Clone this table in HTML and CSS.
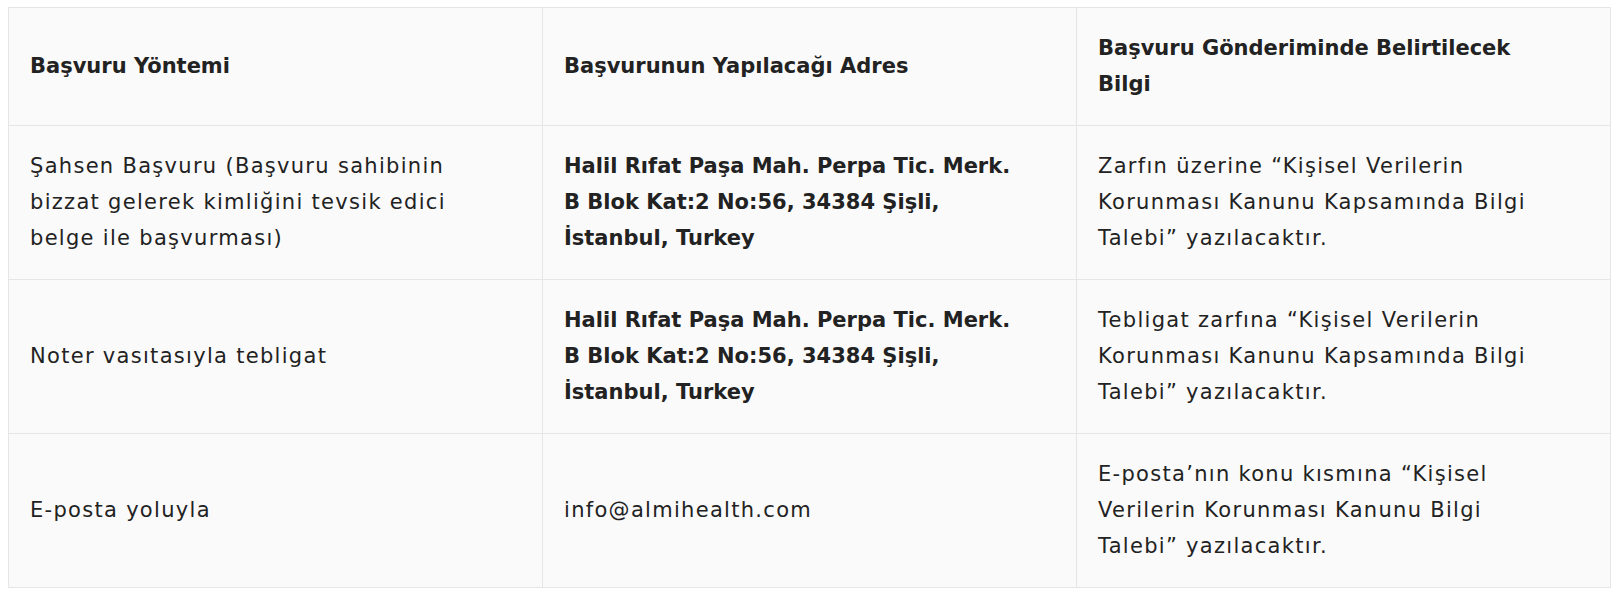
FILE: index.html
```html
<!DOCTYPE html>
<html lang="tr">
<head>
<meta charset="utf-8">
<title>Başvuru Yöntemleri</title>
<link rel="stylesheet" href="styles.css">
</head>
<body>
<table class="kvkk-table">
  <thead>
    <tr>
      <th>Başvuru Yöntemi</th>
      <th>Başvurunun Yapılacağı Adres</th>
      <th>Başvuru Gönderiminde Belirtilecek Bilgi</th>
    </tr>
  </thead>
  <tbody>
    <tr>
      <td>Şahsen Başvuru (Başvuru sahibinin bizzat gelerek kimliğini tevsik edici belge ile başvurması)</td>
      <td class="strong">Halil Rıfat Paşa Mah. Perpa Tic. Merk. B Blok Kat:2 No:56, 34384 Şişli, İstanbul, Turkey</td>
      <td>Zarfın üzerine “Kişisel Verilerin Korunması Kanunu Kapsamında Bilgi Talebi” yazılacaktır.</td>
    </tr>
    <tr>
      <td>Noter vasıtasıyla tebligat</td>
      <td class="strong">Halil Rıfat Paşa Mah. Perpa Tic. Merk. B Blok Kat:2 No:56, 34384 Şişli, İstanbul, Turkey</td>
      <td>Tebligat zarfına “Kişisel Verilerin Korunması Kanunu Kapsamında Bilgi Talebi” yazılacaktır.</td>
    </tr>
    <tr>
      <td>E-posta yoluyla</td>
      <td>info@almihealth.com</td>
      <td>E-posta’nın konu kısmına “Kişisel Verilerin Korunması Kanunu Bilgi Talebi” yazılacaktır.</td>
    </tr>
  </tbody>
</table>
</body>
</html>
```
FILE: styles.css
```css
html, body {
  background: #ffffff;
}
body {
  margin: 7px 8px 8px 8px;
  font-family: "DejaVu Sans", "Noto Sans", sans-serif;
  color: #222222;
}
.kvkk-table {
  width: 100%;
  border-collapse: collapse;
  table-layout: fixed;
  background: #fafafa;
  border: 1px solid #e6e6e6;
}
.kvkk-table th,
.kvkk-table td {
  border: 1px solid #e6e6e6;
  padding: 22px 46px 23px 21px;
  font-size: 21px;
  line-height: 36px;
  text-align: left;
  vertical-align: middle;
}
.kvkk-table th {
  font-weight: 700;
  letter-spacing: 0;
}
.kvkk-table td {
  font-weight: 400;
  letter-spacing: 1.3px;
}
.kvkk-table td.strong {
  font-weight: 700;
  letter-spacing: 0;
}
```
